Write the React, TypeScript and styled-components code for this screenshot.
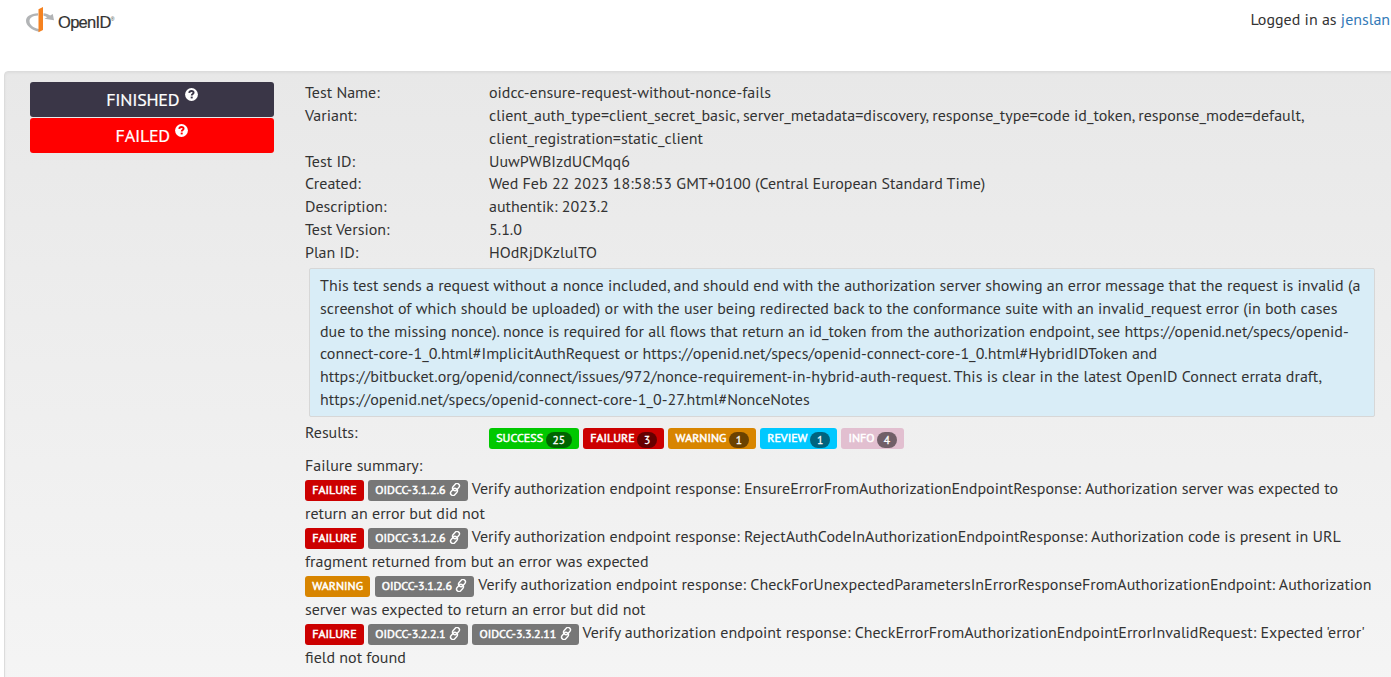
import React from "react";
import styled, { createGlobalStyle } from "styled-components";

const GlobalStyle = createGlobalStyle`
  * { box-sizing: border-box; }
  html, body { margin: 0; height: 100%; overflow: hidden; background: #fff; }
  body {
    font-family: "PT Sans", "Noto Sans", sans-serif;
    font-size: 16px;
    line-height: 22.857px;
    color: #333;
  }
`;

const Page = styled.div`
  width: 1391px;
  height: 677px;
  overflow: hidden;
  display: flex;
  flex-direction: column;
`;

const Header = styled.header`
  flex: none;
  height: 71px;
  display: flex;
  justify-content: space-between;
  align-items: flex-start;
  padding: 3px 0 0 24px;
`;

const User = styled.div`
  width: 140.5px;
  padding-top: 5px;
  white-space: nowrap;
  a { color: #337ab7; text-decoration: none; }
`;

const Panel = styled.main`
  flex: none;
  width: 1400px;
  height: 640px;
  margin-left: 4px;
  padding: 9px 0 0 25px;
  display: flex;
  align-items: flex-start;
  border: 1px solid #dcdcdc;
  border-radius: 4px;
  background: linear-gradient(#e8e8e8, #f5f5f5);
  box-shadow: inset 0 1px 3px rgba(0, 0, 0, 0.05);
`;

const StatusColumn = styled.div`
  width: 244px;
  margin: 1px 31px 0 0;
  display: flex;
  flex-direction: column;
  gap: 1px;
`;

const StatusBar = styled.div<{ $color: string }>`
  height: 35px;
  display: flex;
  justify-content: center;
  align-items: center;
  gap: 5.5px;
  padding-top: 1px;
  border-radius: 3px;
  background: ${(p) => p.$color};
  color: #fff;
  font-size: 18px;
  letter-spacing: -0.25px;
  -webkit-text-stroke: 0.2px #fff;
  svg { margin-bottom: 12px; }
`;

const Details = styled.section`
  width: 1074px;
`;

const Field = styled.div`
  display: grid;
  grid-template-columns: 184px 1fr;
`;

const Value = styled.div`
  max-width: 840px;
`;

const Notice = styled.p`
  width: 1066px;
  margin: 4px 0 4px 4px;
  padding: 5px 10px;
  border: 1px solid #d7d7d7;
  border-radius: 2px;
  background: #d9edf7;
`;

const Results = styled(Field)`
  height: 33px;
`;

const Counts = styled.div`
  display: flex;
  gap: 4px;
  padding-top: 7px;
`;

const Label = styled.span<{ $color: string }>`
  display: inline-block;
  height: 21px;
  padding: 0 7.25px;
  border-radius: 3px;
  background: ${(p) => p.$color};
  color: #fff;
  font-size: 12px;
  -webkit-text-stroke: 0.5px #fff;
  line-height: 19px;
  white-space: nowrap;
  svg { vertical-align: -2px; }
`;

const Count = styled.span`
  display: inline-block;
  height: 16px;
  margin-left: 2.6px;
  padding: 0 6.8px;
  border-radius: 8px;
  background: rgba(0, 0, 0, 0.5);
  font-size: 11.5px;
  -webkit-text-stroke: 0.3px #fff;
  line-height: 16px;
  vertical-align: -1.5px;
`;

const FailureList = styled.div`
  margin-top: -1px;
`;

const Failure = styled.div`
  line-height: 24px;
  height: 48px;
`;

const failed = "#c00";
const warned = "#d88500";

const HelpIcon = ({ ink }: { ink: string }) => (
  <svg width="13" height="13" viewBox="0 0 13 13">
    <circle cx="6.5" cy="6.5" r="6.4" fill="#fff" />
    <path d="M4.2 4.900c.2-1.300 1-1.900 2.200-1.900 1.300 0 2.200.7 2.200 1.700 0 1.400-1.900 1.300-1.900 2.900" fill="none" stroke={ink} strokeWidth="1.9" />
    <rect x="5.700" y="8.600" width="2" height="1.800" fill={ink} />
  </svg>
);

const LinkIcon = () => (
  <svg width="12" height="13" viewBox="0 0 12 13" fill="none" stroke="#fff" strokeWidth="1.4">
    <g transform="rotate(-48 6 6.5)">
      <rect x="-0.400" y="5" width="7.800" height="4.800" rx="2.400" />
      <rect x="4.600" y="3.200" width="7.800" height="4.800" rx="2.400" />
    </g>
  </svg>
);

const Brand = styled.div`
  display: flex;
  color: #333;
  font: 16.5px/38px "Liberation Sans", sans-serif;
  letter-spacing: -0.7px;
  -webkit-text-stroke: 0.2px #333;
  sup { font-size: 5px; line-height: 1; vertical-align: 7px; -webkit-text-stroke: 0; }
`;

const Logo = () => (
  <Brand>
    <svg width="34" height="34" viewBox="0 0 34 34">
      <path d="M14 10.3C6.500 10.800 2 13.500 2 17.800c0 4.900 5 9 13 11v-2.700c-6-1.300-9.500-4.200-9.500-8 0-3.100 3-5.100 8.500-5.500z" fill="#b2b4b6" />
      <path d="M19.500 10.300c2.700.4 4.800 1.100 6.700 2.200l2.600-1.500 1.200 6.200-9.500-1.400 2.700-1.600c-1.200-.7-2.400-1.100-3.700-1.400z" fill="#b2b4b6" />
      <path d="M14.500 6.300 19 4v23L14.500 29.200z" fill="#f58220" />
    </svg>
    <span>OpenID<sup>®</sup></span>
  </Brand>
);

const fields = [
  ["Test Name:", "oidcc-ensure-request-without-nonce-fails"],
  ["Variant:", "client_auth_type=client_secret_basic, server_metadata=discovery, response_type=code id_token, response_mode=default, client_registration=static_client"],
  ["Test ID:", "UuwPWBIzdUCMqq6"],
  ["Created:", "Wed Feb 22 2023 18:58:53 GMT+0100 (Central European Standard Time)"],
  ["Description:", "authentik: 2023.2"],
  ["Test Version:", "5.1.0"],
  ["Plan ID:", "HOdRjDKzlulTO"],
];

const counts: [string, number, string][] = [
  ["SUCCESS", 25, "#00c800"],
  ["FAILURE", 3, failed],
  ["WARNING", 1, warned],
  ["REVIEW", 1, "#00c8ff"],
  ["INFO", 4, "#e2bfd0"],
];

const failures = [
  { level: "FAILURE", refs: ["OIDCC-3.1.2.6"], text: "Verify authorization endpoint response: EnsureErrorFromAuthorizationEndpointResponse: Authorization server was expected to return an error but did not" },
  { level: "FAILURE", refs: ["OIDCC-3.1.2.6"], text: "Verify authorization endpoint response: RejectAuthCodeInAuthorizationEndpointResponse: Authorization code is present in URL fragment returned from but an error was expected" },
  { level: "WARNING", refs: ["OIDCC-3.1.2.6"], text: "Verify authorization endpoint response: CheckForUnexpectedParametersInErrorResponseFromAuthorizationEndpoint: Authorization server was expected to return an error but did not" },
  { level: "FAILURE", refs: ["OIDCC-3.2.2.1", "OIDCC-3.3.2.11"], text: "Verify authorization endpoint response: CheckErrorFromAuthorizationEndpointErrorInvalidRequest: Expected 'error' field not found" },
];

export default function App() {
  return (
    <Page>
      <GlobalStyle />
      <Header>
        <Logo />
        <User>Logged in as <a>jenslan</a></User>
      </Header>
      <Panel>
        <StatusColumn>
          <StatusBar $color="#3a3647">FINISHED <HelpIcon ink="#3a3647" /></StatusBar>
          <StatusBar $color="#f00">FAILED <HelpIcon ink="#f00" /></StatusBar>
        </StatusColumn>
        <Details>
          {fields.map(([name, value]) => (
            <Field key={name}>
              <div>{name}</div>
              <Value>{value}</Value>
            </Field>
          ))}
          <Notice>
            This test sends a request without a nonce included, and should end with the authorization server showing an error message that the request is invalid (a screenshot of which should be uploaded) or with the user being redirected back to the conformance suite with an invalid_request error (in both cases due to the missing nonce). nonce is required for all flows that return an id_token from the authorization endpoint, see https://openid.net/specs/openid-connect-core-1_0.html#ImplicitAuthRequest or https://openid.net/specs/openid-connect-core-1_0.html#HybridIDToken and https://bitbucket.org/openid/connect/issues/972/nonce-requirement-in-hybrid-auth-request. This is clear in the latest OpenID Connect errata draft, https://openid.net/specs/openid-connect-core-1_0-27.html#NonceNotes
          </Notice>
          <Results>
            <div>Results:</div>
            <Counts>
              {counts.map(([name, count, color]) => (
                <Label key={name} $color={color}>{name}<Count>{count}</Count></Label>
              ))}
            </Counts>
          </Results>
          <div>Failure summary:</div>
          <FailureList>
            {failures.map((f, i) => (
              <Failure key={i}>
                <Label $color={f.level === "WARNING" ? warned : failed}>{f.level}</Label>{" "}
                {f.refs.map((r) => (
                  <React.Fragment key={r}><Label $color="#777">{r} <LinkIcon /></Label>{" "}</React.Fragment>
                ))}
                {f.text}
              </Failure>
            ))}
          </FailureList>
        </Details>
      </Panel>
    </Page>
  );
}
